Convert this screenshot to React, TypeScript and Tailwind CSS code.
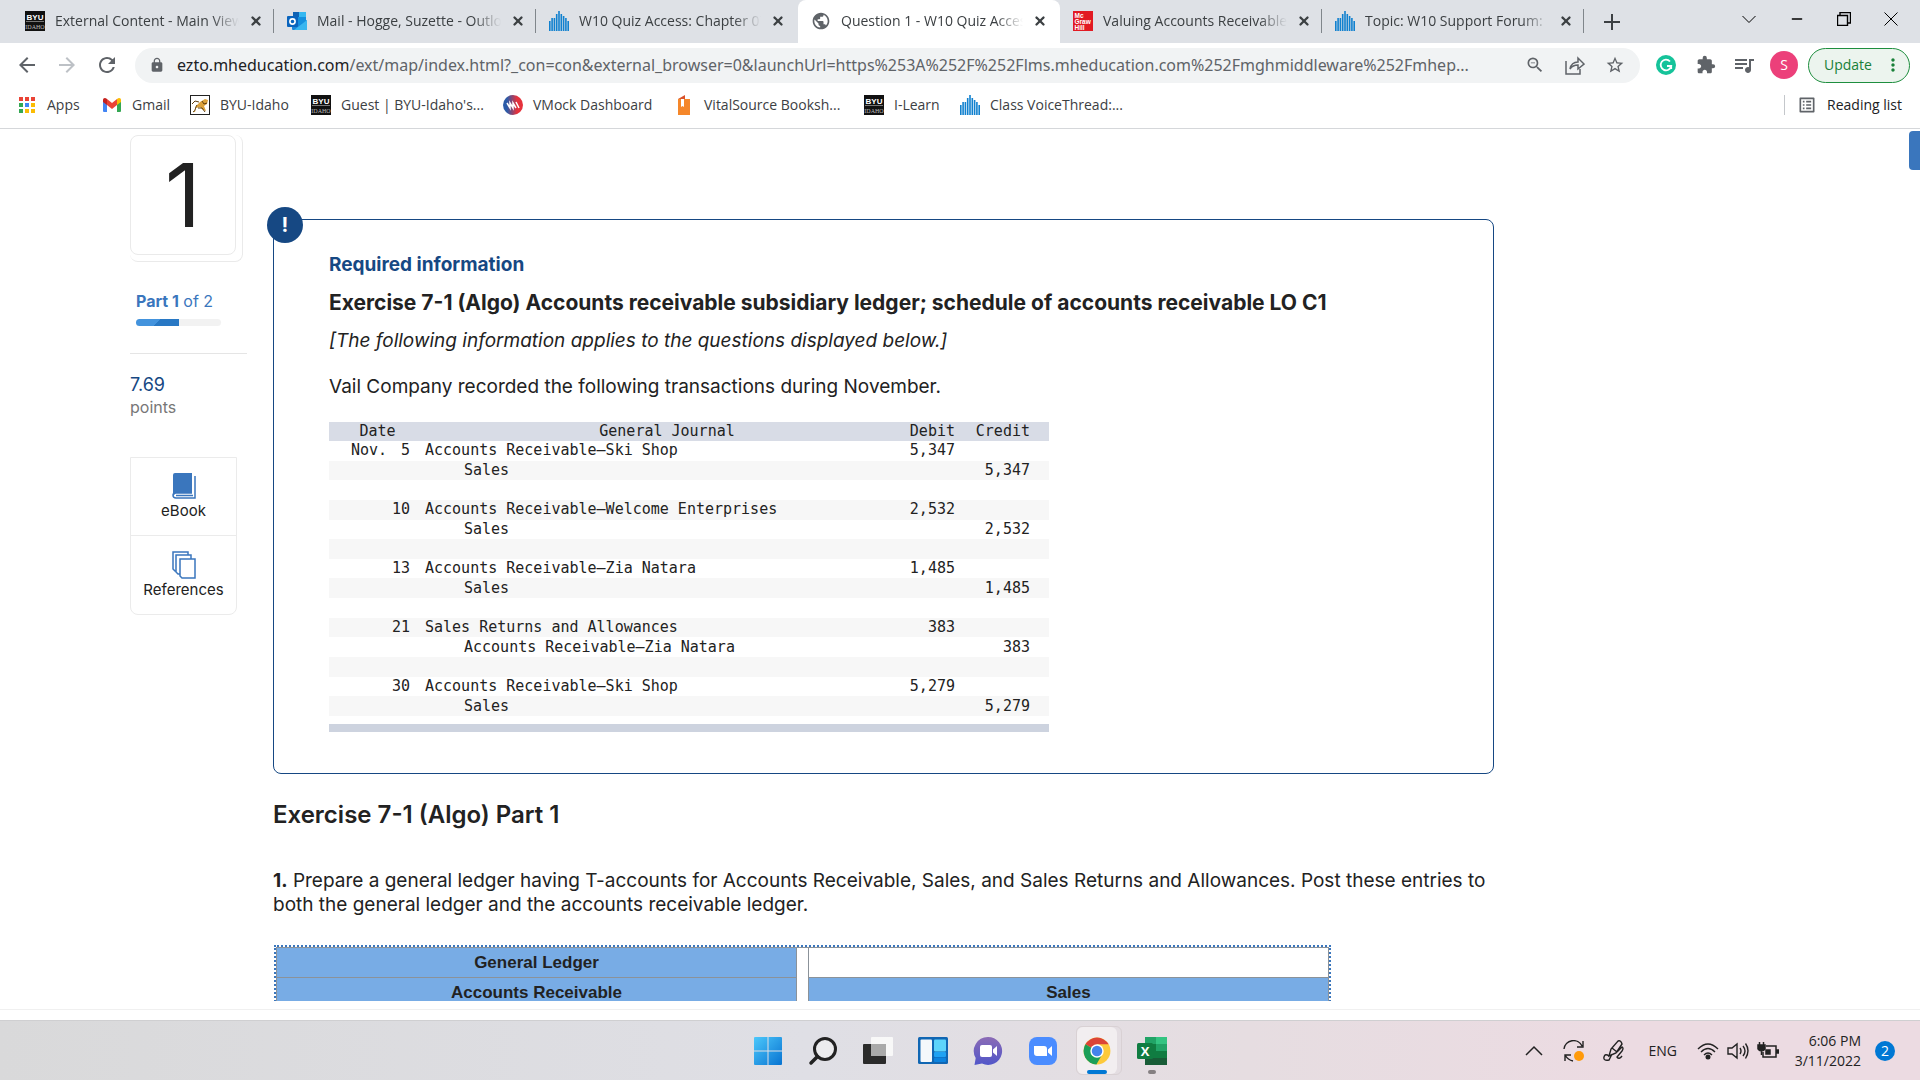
import type { ReactNode } from "react";
import clsx from "clsx";
import { Minus, X } from "lucide-react";
import {
  MdArrowBack,
  MdArrowForward,
  MdExtension,
  MdLock,
  MdMoreVert,
  MdOutlineListAlt,
  MdOutlineZoomOut,
  MdPublic,
  MdQueueMusic,
  MdRefresh,
  MdStarBorder,
} from "react-icons/md";

function ByuIcon() {
  return (
    <svg viewBox="0 0 20 20" className="size-5 shrink-0" aria-hidden="true">
      <rect width="20" height="20" fill="#111" />
      <rect x="1" y="10" width="18" height="1" fill="#777" />
      <text x="10" y="9" textAnchor="middle" fontSize="8" fontWeight="900" fill="#fff" fontFamily="Liberation Sans, sans-serif">
        BYU
      </text>
      <text x="10" y="18" textAnchor="middle" fontSize="6" fill="#bbb" fontFamily="Liberation Serif, serif">
        IDAHO
      </text>
    </svg>
  );
}

function OutlookIcon() {
  return (
    <svg viewBox="0 0 20 20" className="size-5 shrink-0" aria-hidden="true">
      <rect x="6" y="1" width="13" height="13" rx="1" fill="#1490df" />
      <rect x="6" y="1" width="6" height="5" fill="#0f63b5" />
      <rect x="12" y="1" width="7" height="5" fill="#35b8f1" />
      <path d="M5 9l8 5 7-5v9a1 1 0 0 1-1 1H6a1 1 0 0 1-1-1z" fill="#1a86d9" />
      <path d="M20 9v9a1 1 0 0 1-1 1H7z" fill="#38b6f0" />
      <rect x="0" y="5" width="11" height="11" rx="1" fill="#0a64bd" />
      <circle cx="5.5" cy="10.500" r="2.600" fill="none" stroke="#fff" strokeWidth="1.600" />
    </svg>
  );
}

function VoiceIcon() {
  const bars = [10, 7, 7, 3, 0, 3, 5, 7, 10];
  return (
    <svg viewBox="0 0 20 20" className="size-5 shrink-0" aria-hidden="true" fill="#1181cf">
      {bars.map((top, i) => (
        <rect key={i} x={i * 2.3} y={top} width="1.600" height={20 - top} />
      ))}
    </svg>
  );
}

function McGrawIcon() {
  return (
    <svg viewBox="0 0 20 20" className="size-5 shrink-0" aria-hidden="true">
      <rect width="20" height="20" fill="#e21a23" />
      <g fill="#fff" fontSize="6.500" fontWeight="700" fontFamily="Liberation Sans, sans-serif">
        <text x="1.500" y="6.500">Mc</text>
        <text x="1.500" y="12.500">Graw</text>
        <text x="1.500" y="18.500">Hill</text>
      </g>
    </svg>
  );
}

function AppsIcon() {
  const colors = ["#ea4335", "#ea4335", "#ea4335", "#34a853", "#4285f4", "#fbbc04", "#34a853", "#fbbc04", "#fbbc04"];
  return (
    <svg viewBox="0 0 16 16" className="size-4 shrink-0" aria-hidden="true">
      {colors.map((fill, i) => (
        <rect key={i} x={(i % 3) * 6} y={Math.floor(i / 3) * 6} width="4" height="4" fill={fill} />
      ))}
    </svg>
  );
}

function GmailIcon() {
  return (
    <svg viewBox="0 0 20 16" className="h-4 w-5 shrink-0" aria-hidden="true">
      <path d="M1 3v11a1 1 0 0 0 1 1h3V7z" fill="#4285f4" />
      <path d="M19 3v11a1 1 0 0 1-1 1h-3V7z" fill="#34a853" />
      <path d="M5 2v6l5 4 5-4V2l-5 4z" fill="#ea4335" />
      <path d="M1 3c0-2 2-3 4-1v6L1 5z" fill="#c5221f" />
      <path d="M19 3c0-2-2-3-4-1v6l4-3z" fill="#fbbc04" />
    </svg>
  );
}

function CougarIcon() {
  return (
    <svg viewBox="0 0 20 20" className="size-5 shrink-0" aria-hidden="true">
      <rect x=".5" y=".5" width="19" height="19" fill="#fff" stroke="#222" />
      <path d="M3 17c3-1 2-5 4-7l3-3 5-3 3 1-1 4-3 2 2 5-3-1-3-3-4 1-1 4z" fill="#dba13a" />
      <path d="M3 17c3-1 2-5 4-7M8 13l4 0 3 4M2 9l3-3 4 1M12 6l2 3 3-1" fill="none" stroke="#5d3d10" />
    </svg>
  );
}

function VmockIcon() {
  return (
    <svg viewBox="0 0 20 20" className="size-5 shrink-0" aria-hidden="true">
      <defs>
        <linearGradient id="vmock" x1="0" x2="1">
          <stop offset="0.200" stopColor="#2b5ba8" />
          <stop offset="0.700" stopColor="#e5323c" />
        </linearGradient>
      </defs>
      <circle cx="10" cy="10" r="10" fill="url(#vmock)" />
      <path d="M4 8l3 5V8l3 5V8l3 5M13 7l3 6" fill="none" stroke="#fff" strokeWidth="1.500" />
    </svg>
  );
}

function VitalIcon() {
  return (
    <svg viewBox="0 0 20 20" className="size-5 shrink-0" aria-hidden="true">
      <path d="M4 4h12v16H4z" fill="#f5872a" />
      <path d="M7 4h3v8l-1.500-1L7 12z" fill="#fff" />
      <path d="M4 4l7-4v4z" fill="#d9532c" />
    </svg>
  );
}

const tabs = [
  { title: "External Content - Main View", icon: <ByuIcon /> },
  { title: "Mail - Hogge, Suzette - Outlook", icon: <OutlookIcon /> },
  { title: "W10 Quiz Access: Chapter 07", icon: <VoiceIcon /> },
  { title: "Question 1 - W10 Quiz Access", icon: <MdPublic className="size-5 shrink-0 text-[#5f6368]" />, active: true },
  { title: "Valuing Accounts Receivable", icon: <McGrawIcon /> },
  { title: "Topic: W10 Support Forum:", icon: <VoiceIcon /> },
];

const bookmarks = [
  { label: "Apps", icon: <AppsIcon />, width: "w-[83px] gap-3" },
  { label: "Gmail", icon: <GmailIcon />, width: "w-[88px] gap-2.5" },
  { label: "BYU-Idaho", icon: <CougarIcon />, width: "w-[121px] gap-2.5" },
  { label: "Guest | BYU-Idaho's...", icon: <ByuIcon />, width: "w-48 gap-2.5" },
  { label: "VMock Dashboard", icon: <VmockIcon />, width: "w-[171px] gap-2.5" },
  { label: "VitalSource Booksh...", icon: <VitalIcon />, width: "w-[190px] gap-2.5" },
  { label: "I-Learn", icon: <ByuIcon />, width: "w-24 gap-2.5" },
  { label: "Class VoiceThread:...", icon: <VoiceIcon />, width: "w-44 gap-2.5" },
];

type JournalRow = { month?: string; day?: string; account?: string; indent?: boolean; debit?: string; credit?: string };

const journal: JournalRow[] = [
  { month: "Nov.", day: "5", account: "Accounts Receivable—Ski Shop", debit: "5,347" },
  { account: "Sales", indent: true, credit: "5,347" },
  {},
  { day: "10", account: "Accounts Receivable—Welcome Enterprises", debit: "2,532" },
  { account: "Sales", indent: true, credit: "2,532" },
  {},
  { day: "13", account: "Accounts Receivable—Zia Natara", debit: "1,485" },
  { account: "Sales", indent: true, credit: "1,485" },
  {},
  { day: "21", account: "Sales Returns and Allowances", debit: "383" },
  { account: "Accounts Receivable—Zia Natara", indent: true, credit: "383" },
  {},
  { day: "30", account: "Accounts Receivable—Ski Shop", debit: "5,279" },
  { account: "Sales", indent: true, credit: "5,279" },
];

function TabStrip() {
  return (
    <div className="flex h-[43px] shrink-0 bg-[#dee1e6] pl-3">
      {tabs.map((tab, i) => (
        <div
          key={tab.title}
          className={clsx(
            "flex w-[262px] shrink-0 items-center gap-2.5 px-[13px] pb-0.5 text-[#3c4043]",
            tab.active && "rounded-t-lg bg-white"
          )}
        >
          {tab.icon}
          <span className="flex-1 overflow-hidden whitespace-nowrap text-sm leading-5 [mask-image:linear-gradient(to_right,black_85%,transparent)]">
            {tab.title}
          </span>
          <button type="button" aria-label={`Close ${tab.title}`}>
            <X className="size-3.5" strokeWidth={4} />
          </button>
          {!tab.active && i !== 2 ? <span className="-mr-[13px] h-6 w-px bg-[#80868b]" /> : null}
        </div>
      ))}
      <button type="button" aria-label="New tab" className="ml-5 flex items-center text-[#3c4043]">
        <svg viewBox="0 0 16 16" className="size-4" stroke="currentColor" strokeWidth="2">
          <path d="M8 0v16M0 8h16" />
        </svg>
      </button>
      <div className="mb-1.5 ml-auto flex w-[178px] items-center justify-between pr-[22px] text-black">
        <button type="button" aria-label="Search tabs">
          <svg viewBox="0 0 14 14" className="size-3.5" fill="none" stroke="currentColor">
            <path d="M.5 4L7 10.500 13.500 4" />
          </svg>
        </button>
        <button type="button" aria-label="Minimize">
          <Minus className="size-4" strokeWidth={2} />
        </button>
        <button type="button" aria-label="Restore">
          <svg viewBox="0 0 14 14" className="size-3.5" fill="none" stroke="currentColor">
            <path d="M.5 3.500h10v10H.5zM3 3V.5h10.500V11H11" strokeWidth="1.400" />
          </svg>
        </button>
        <button type="button" aria-label="Close window">
          <svg viewBox="0 0 14 14" className="size-3.5" stroke="currentColor">
            <path d="M.5.5l13 13M13.500.5l-13 13" />
          </svg>
        </button>
      </div>
    </div>
  );
}

function Toolbar() {
  return (
    <div className="flex h-[44px] shrink-0 items-center bg-white pr-2.5 pl-[15px] text-[#5f6368]">
      <button type="button" aria-label="Back">
        <MdArrowBack className="size-6" />
      </button>
      <button type="button" aria-label="Forward" className="ml-4 text-[#bdc1c6]">
        <MdArrowForward className="size-6" />
      </button>
      <button type="button" aria-label="Reload" className="ml-4">
        <MdRefresh className="size-6" />
      </button>
      <div className="ml-4 flex h-[35px] min-w-0 flex-1 items-center rounded-full bg-[#f1f3f4] pr-[15px] pl-3.5">
        <MdLock className="size-4 shrink-0" />
        <p className="ml-3 flex-1 overflow-hidden font-['Noto_Sans','Open_Sans',sans-serif] text-base leading-6 whitespace-nowrap">
          <span className="text-[#202124]">ezto.mheducation.com</span>
          /ext/map/index.html?_con=con&amp;external_browser=0&amp;launchUrl=https%253A%252F%252Flms.mheducation.com%252Fmghmiddleware%252Fmhep...
        </p>
        <div className="flex shrink-0 items-center gap-5">
          <button type="button" aria-label="Zoom">
            <MdOutlineZoomOut className="size-5" />
          </button>
          <button type="button" aria-label="Share">
            <svg viewBox="0 0 20 20" className="size-5" fill="none" stroke="currentColor" strokeWidth="1.500">
              <path d="M1 6v13h14v-5M5 14c1-5 4-7 8-7V3l6 6-6 5v-4c-3 0-6 1-8 4z" />
            </svg>
          </button>
          <button type="button" aria-label="Bookmark this page">
            <MdStarBorder className="size-5" />
          </button>
        </div>
      </div>
      <button type="button" aria-label="Grammarly" className="ml-4 flex size-5 items-center justify-center rounded-full bg-[#15c39a]">
        <svg viewBox="0 0 20 20" className="size-5" fill="none" stroke="#fff" strokeWidth="1.800">
          <path d="M14 6.500A5.300 5.300 0 1 0 15.200 11H11M15.200 11v3" />
        </svg>
      </button>
      <button type="button" aria-label="Extensions" className="ml-5">
        <MdExtension className="size-5" />
      </button>
      <button type="button" aria-label="Media" className="ml-4">
        <MdQueueMusic className="size-6" />
      </button>
      <button type="button" className="ml-3.5 size-7 rounded-full bg-[#ec407a] text-sm leading-7 text-white">
        S
      </button>
      <button
        type="button"
        className="ml-2.5 flex h-[35px] w-[102px] items-center justify-between rounded-full border border-[#1e8e3e] bg-[#ecf4ee] pr-1.5 pl-[15px] text-sm text-[#188038]"
      >
        Update
        <MdMoreVert className="size-5" />
      </button>
    </div>
  );
}

function BookmarksBar() {
  return (
    <div className="flex h-[42px] shrink-0 items-center border-b border-[#d5d7da] bg-white pb-1.5 pl-[19px] text-sm leading-5 text-[#3c4043]">
      {bookmarks.map((item) => (
        <a key={item.label} href="#" className={clsx("flex shrink-0 items-center whitespace-nowrap", item.width)}>
          {item.icon}
          {item.label}
        </a>
      ))}
      <button type="button" className="mr-[18px] ml-auto flex items-center gap-2.5 border-l border-[#c4c7cb] pl-3 text-[#202124]">
        <MdOutlineListAlt className="size-5 text-[#5f6368]" />
        Reading list
      </button>
    </div>
  );
}

function Tool({ label, children }: { label: string; children: ReactNode }) {
  return (
    <button type="button" className="flex h-[78px] w-full flex-col items-center justify-center gap-px text-[15px] leading-5">
      {children}
      {label}
    </button>
  );
}

function QuestionSidebar() {
  return (
    <aside className="w-[117px] shrink-0">
      <div className="mr-1 h-[127px] w-[113px] rounded-lg border-r border-b border-[#eaeaea] pr-1.5 pb-1.5">
        <div className="flex h-full items-center justify-center rounded-lg border border-[#eaeaea] text-[88px] leading-none text-[#222]">
          1
        </div>
      </div>
      <div className="mt-[27px] ml-1.5 text-base leading-6 text-[#3a76bd]">
        <b>Part 1</b> of 2
      </div>
      <div className="mt-1.5 ml-1.5 flex h-[7px] w-[85px] overflow-hidden rounded-sm bg-[#f2f2f2]">
        <div className="w-1/2 bg-[linear-gradient(135deg,#4393dd_48%,#2878c4_50%)]" />
      </div>
      <hr className="mt-[27px] border-[#e5e5e5]" />
      <p className="mt-5 text-lg leading-[22px] text-[#164883]">7.69</p>
      <p className="text-base leading-[22px] text-[#777]">points</p>
      <div className="mt-[39px] w-[107px] divide-y divide-[#ebebeb] rounded-b-lg border border-[#ebebeb] text-[#222]">
        <Tool label="eBook">
          <svg viewBox="0 0 24 28" className="h-7 w-6" aria-hidden="true">
            <path d="M3 1h17v20H4l-3 3V3q0-2 2-2z" fill="#3a76bd" />
            <path d="M1 23q0-2 3-2h16M1 23q0 3 3 3h19V4M4 23.500h17" fill="none" stroke="#3a76bd" strokeWidth="1.500" />
          </svg>
        </Tool>
        <Tool label="References">
          <svg viewBox="0 0 24 28" className="h-7 w-6" fill="#fff" stroke="#3a76bd" strokeWidth="1.500" aria-hidden="true">
            <path d="M1 1h15v19H3l-2-2z" />
            <path d="M4 4h15v19H6l-2-2z" />
            <path d="M8 8h15v19H10l-2-2z" />
          </svg>
        </Tool>
      </div>
    </aside>
  );
}

function JournalTable() {
  return (
    <div className="mt-[23px] w-[720px] font-['DejaVu_Sans_Mono',monospace] text-[15px] leading-[19px] text-[#222]">
      <table className="h-[294px] w-full table-fixed">
        <colgroup>
          <col className="w-[62px]" />
          <col className="w-[19px]" />
          <col className="w-[15px]" />
          <col />
          <col className="w-[46px]" />
          <col className="w-[75px]" />
          <col className="w-[19px]" />
        </colgroup>
        <thead>
          <tr className="bg-[#d8dce6] [&>th]:p-0 [&>th]:font-normal">
            <th colSpan={2} className="pl-4!">Date</th>
            <th />
            <th>General Journal</th>
            <th className="text-right">Debit</th>
            <th className="text-right">Credit</th>
            <th />
          </tr>
        </thead>
        <tbody>
          {journal.map((row, i) => (
            <tr key={i} className="whitespace-nowrap even:bg-[#f7f7f7] [&>td]:p-0">
              <td className="text-right">{row.month ? <span className="pr-1">{row.month}</span> : "\u00a0"}</td>
              <td className="text-right">{row.day}</td>
              <td />
              <td className={row.indent ? "pl-[39px]!" : undefined}>{row.account}</td>
              <td className="text-right">{row.debit}</td>
              <td className="text-right">{row.credit}</td>
              <td />
            </tr>
          ))}
        </tbody>
      </table>
      <div className="mt-2 h-2 bg-[#cdd3df]" />
    </div>
  );
}

function Question() {
  return (
    <main className="ml-[26px] min-w-0 max-w-[1221px] flex-1 pt-[84px] text-[#222]">
      <section className="relative h-[555px] rounded-lg border border-[#164883] pt-[33px] pl-[55px]">
        <span className="absolute -top-[13px] -left-[7px] flex size-9 items-center justify-center rounded-full bg-[#164883] text-xl font-bold text-white">
          !
        </span>
        <h2 className="text-[19px] leading-6 font-bold text-[#164883]">Required information</h2>
        <h1 className="mt-3 text-[21px] leading-7 font-bold">
          Exercise 7-1 (Algo) Accounts receivable subsidiary ledger; schedule of accounts receivable LO C1
        </h1>
        <p className="mt-3 text-[19px] leading-6 italic">[The following information applies to the questions displayed below.]</p>
        <p className="mt-[22px] text-[19px] leading-6">Vail Company recorded the following transactions during November.</p>
        <JournalTable />
      </section>
      <h2 className="mt-[25px] text-2xl leading-8 font-semibold">Exercise 7-1 (Algo) Part 1</h2>
      <p className="mt-[38px] text-[19px] leading-6">
        <b>1.</b> Prepare a general ledger having T-accounts for Accounts Receivable, Sales, and Sales Returns and Allowances. Post these
        entries to both the general ledger and the accounts receivable ledger.
      </p>
      <div className="mt-7 ml-px w-[1057px] border-2 border-dotted border-[#3a76bd]">
        <table className="w-full table-fixed border-collapse font-['Liberation_Sans',Arial,sans-serif] text-[17px] leading-5 [&_td]:h-[30px] [&_td]:border [&_td]:border-[#8b9299] [&_td]:p-0 [&_td]:text-center [&_td]:font-bold">
          <colgroup>
            <col />
            <col className="w-3" />
            <col />
          </colgroup>
          <tbody>
            <tr>
              <td className="bg-[#78ace5]">General Ledger</td>
              <td rowSpan={2} />
              <td />
            </tr>
            <tr>
              <td className="bg-[#78ace5]">Accounts Receivable</td>
              <td className="bg-[#78ace5]">Sales</td>
            </tr>
          </tbody>
        </table>
      </div>
    </main>
  );
}

function TaskbarApps() {
  return (
    <div className="ml-6 flex items-center gap-[25px] [&>button>svg]:size-[30px]">
      <button type="button" aria-label="Start">
        <svg viewBox="0 0 30 30">
          <defs>
            <linearGradient id="win" x1="0" y1="0" x2="1" y2="1">
              <stop offset="0" stopColor="#4cc8fb" />
              <stop offset="1" stopColor="#0873d1" />
            </linearGradient>
          </defs>
          <path d="M2 1h12.500v13.500H1V2q0-1 1-1zM15.500 1H28q1 0 1 1v12.500H15.500zM1 15.500h13.500V29H2q-1 0-1-1zM15.500 15.500H29V28q0 1-1 1H15.500z" fill="url(#win)" />
        </svg>
      </button>
      <button type="button" aria-label="Search">
        <svg viewBox="0 0 30 30" fill="none" stroke="#222" strokeLinecap="round">
          <circle cx="17" cy="13" r="10.500" strokeWidth="3" fill="#ececee" />
          <path d="M9.500 20.500L3 27" strokeWidth="3.500" />
        </svg>
      </button>
      <button type="button" aria-label="Task view">
        <svg viewBox="0 0 30 30">
          <rect x="0" y="8" width="23" height="20" rx="1" fill="#2b2b2b" />
          <rect x="8" y="1" width="22" height="19" rx="1" fill="#f8f8f8" />
          <rect x="8" y="8" width="15" height="12" fill="#aaa" />
        </svg>
      </button>
      <button type="button" aria-label="Widgets">
        <svg viewBox="0 0 30 30">
          <rect x="0" y="1" width="30" height="27" rx="1.500" fill="#1066b3" />
          <rect x="2.500" y="3.500" width="11.500" height="22.500" rx="1" fill="#f5f8fb" />
          <rect x="16" y="3.500" width="12" height="12" rx="1" fill="#5dd4fb" />
          <rect x="16" y="16" width="12" height="5" rx="1" fill="#1fa2f3" />
          <rect x="16" y="21.500" width="12" height="4.500" rx="1" fill="#0c83df" />
        </svg>
      </button>
      <button type="button" aria-label="Chat">
        <svg viewBox="0 0 30 30">
          <defs>
            <linearGradient id="chat" x1="0" y1="0" x2="0" y2="1">
              <stop offset="0" stopColor="#8b6bb5" />
              <stop offset="1" stopColor="#5156c9" />
            </linearGradient>
          </defs>
          <path d="M15 1a14 14 0 1 1-6 26.600L1.500 29l1.200-7A14 14 0 0 1 15 1z" fill="url(#chat)" />
          <rect x="7" y="9" width="12" height="12" rx="2" fill="#fff" />
          <path d="M20 13.500L24 10v10l-4-3.500z" fill="#fff" />
        </svg>
      </button>
      <button type="button" aria-label="Zoom">
        <svg viewBox="0 0 30 30">
          <rect x="1" y="1" width="28" height="28" rx="8" fill="#4a8cff" />
          <path d="M6 10h10q3 0 3 3v7H9q-3 0-3-3zM20 13.500L24 10v10l-4-3.500z" fill="#fff" />
        </svg>
      </button>
      <div className="-mr-2.5 -ml-[7px] h-[49px] w-[46px] rounded-md border border-[#d9d1d4] pr-1">
        <button type="button" aria-label="Chrome" className="relative flex h-full w-full items-center justify-center rounded-md bg-[#f2eef0]">
          <svg viewBox="0 0 48 48" className="size-7">
            <circle cx="24" cy="24" r="23" fill="#fdc93b" />
            <path d="M24 24L4.100 12.500A23 23 0 0 1 43.900 12.500H24z" fill="#dc4437" />
            <path d="M24 24L4.100 12.500A23 23 0 0 0 23 47l10-17.500z" fill="#1b9e58" />
            <circle cx="24" cy="24" r="11.500" fill="#fff" />
            <circle cx="24" cy="24" r="9" fill="#4583ec" />
          </svg>
          <span className="absolute bottom-0 h-1 w-5 rounded-full bg-[#0078d4]" />
        </button>
      </div>
      <button type="button" aria-label="Excel" className="relative flex justify-center">
        <svg viewBox="0 0 30 30">
          <path d="M8 1h11v9H8z" fill="#21a366" />
          <path d="M19 1h11v9H19z" fill="#33c481" />
          <path d="M8 8h11v14H8z" fill="#107c41" />
          <path d="M19 8h11v7H19z" fill="#21a366" />
          <path d="M19 15h11v7H19z" fill="#107c41" />
          <path d="M8 22h22v7H8z" fill="#185c37" />
          <rect x="0" y="7" width="16" height="16" rx="1.500" fill="#107c41" />
          <text x="8" y="19.500" textAnchor="middle" fontSize="13" fontWeight="700" fill="#fff" fontFamily="Open Sans, sans-serif">
            X
          </text>
        </svg>
        <span className="absolute -bottom-2 h-1 w-2 rounded-full bg-[#858082]" />
      </button>
    </div>
  );
}

function Tray() {
  return (
    <div className="flex items-center text-[#222]">
      <button type="button" aria-label="Show hidden icons">
        <svg viewBox="0 0 18 18" className="size-[18px]" fill="none" stroke="currentColor" strokeWidth="1.500">
          <path d="M1 13l8-8 8 8" />
        </svg>
      </button>
      <svg viewBox="0 0 22 22" className="ml-5 size-[22px]" fill="none" stroke="currentColor" strokeWidth="1.400">
        <path d="M1 9A9.500 9.500 0 0 1 19 6M20 1v6h-6M2 21v-6h6M2 15q3 5 8 6" />
        <circle cx="16" cy="16" r="5" fill="#ff9a0a" stroke="none" />
      </svg>
      <svg viewBox="0 0 22 22" className="ml-[18px] size-[22px]" fill="none" stroke="currentColor" strokeWidth="1.400">
        <path d="M6 16l2-7 7-8q3-1 4 3l-6 9zM9 8l5 4M6 16q-4-3-5 1t5 3l3-6M14 12l5-5q2 1 0 4l-5 6q2 3 5-1" />
      </svg>
      <span className="ml-6 text-sm">ENG</span>
      <button type="button" aria-label="Network, volume and battery" className="ml-5 flex items-center gap-2">
        <svg viewBox="0 0 22 18" className="h-[18px] w-[22px]" fill="none" stroke="currentColor" strokeWidth="1.400">
          <path d="M1 7q10-10 20 0M4 10q7-7 14 0M7 13q4-4 8 0" />
          <circle cx="11" cy="15" r="1.800" fill="currentColor" />
        </svg>
        <svg viewBox="0 0 22 18" className="h-[18px] w-[22px]" fill="none" stroke="currentColor" strokeWidth="1.400">
          <path d="M1 6h4l5-4v14l-5-4H1zM13 6q2 3 0 6M16 4q4 5 0 10M18.500 1.500q5 7 0 15" />
        </svg>
        <svg viewBox="0 0 22 18" className="h-[18px] w-[22px]" fill="none" stroke="currentColor" strokeWidth="1.500">
          <path d="M9 4h10v11H6v-5M20 8v3h1.500V8z" />
          <path d="M1 3h7v4q-1 2-3.500 2T1 7zM2.500 0v3M6.500 0v3M4.500 9v4" fill="currentColor" />
          <path d="M9 8h4v4H9z" fill="currentColor" />
        </svg>
      </button>
      <div className="ml-3.5 w-[68px] text-right text-sm leading-5 whitespace-nowrap">
        <p>6:06 PM</p>
        <p>3/11/2022</p>
      </div>
      <span className="ml-3.5 size-5 rounded-full bg-[#0078d4] text-center text-sm leading-5 text-white">2</span>
    </div>
  );
}

export default function App() {
  return (
    <div className="flex h-screen flex-col overflow-hidden bg-white font-['Open_Sans','Noto_Sans',sans-serif]">
      <TabStrip />
      <Toolbar />
      <BookmarksBar />
      <div className="relative flex min-h-0 flex-1 flex-col font-['Inter',sans-serif]">
        <div className="flex h-[872px] min-h-0 items-start overflow-hidden pt-1.5 pl-[130px]">
          <QuestionSidebar />
          <Question />
        </div>
        <button type="button" aria-label="Open panel" className="absolute top-0.5 right-0 h-[39px] w-[11px] rounded-l bg-[#3a76bd]" />
      </div>
      <footer className="h-[11px] shrink-0 border-t border-[#f0f0f0]" />
      <div className="grid h-[60px] shrink-0 grid-cols-[1fr_auto_1fr] items-center border-t border-[#cfcfd1] bg-[linear-gradient(to_right,#d9d9da,#dfdfe5_42%,#e6dde1_65%,#ecdbe2_85%)] pr-[25px]">
        <div />
        <TaskbarApps />
        <div className="ml-auto">
          <Tray />
        </div>
      </div>
    </div>
  );
}
